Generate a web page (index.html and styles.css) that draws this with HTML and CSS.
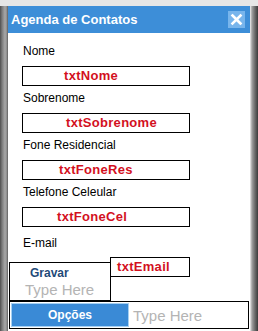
FILE: index.html
```html
<!DOCTYPE html>
<html lang="pt">
<head>
    <meta charset="UTF-8">
    <title>Agenda de Contatos</title>
    <link rel="stylesheet" href="styles.css">
</head>
<body>
    <div class="device">
        <div class="window">
            <div class="titlebar">
                <span class="title">Agenda de Contatos</span>
                <span class="close">
                    <svg width="17" height="17" viewBox="0 0 17 17">
                        <path d="M4.5 4.5 L12.5 12.5 M12.5 4.5 L4.5 12.5" stroke="#fff" stroke-width="2.6" stroke-linecap="square"/>
                    </svg>
                </span>
            </div>

            <div class="content">
                <div class="field">
                    <div class="label">Nome</div>
                    <div class="box"><span class="ctl ctl-nome">txtNome</span></div>
                </div>
                <div class="field">
                    <div class="label">Sobrenome</div>
                    <div class="box"><span class="ctl ctl-sobrenome">txtSobrenome</span></div>
                </div>
                <div class="field">
                    <div class="label">Fone Residencial</div>
                    <div class="box"><span class="ctl ctl-fone">txtFoneRes</span></div>
                </div>
                <div class="field">
                    <div class="label">Telefone Celeular</div>
                    <div class="box"><span class="ctl ctl-cel">txtFoneCel</span></div>
                </div>
                <div class="field field-email">
                    <div class="label">E-mail</div>
                    <div class="box box-email"><span class="ctl ctl-email">txtEmail</span></div>
                </div>
            </div>

            <div class="menubar">
                <div class="menu-btn">Opções</div>
                <div class="type-here">Type Here</div>
            </div>
        </div>

        <!-- popup menu over the form -->
        <div class="popup">
            <div class="popup-item">Gravar</div>
            <div class="popup-type">Type Here</div>
        </div>
    </div>
</body>
</html>
```

FILE: styles.css
```css
body {
    margin: 0;
    font-family: "Liberation Sans", Arial, sans-serif;
}
.device {
    position: relative;
    width: 258px;
    height: 331px;
    box-sizing: border-box;
    padding: 6px 8px 2px 8px;
    background:
        linear-gradient(to bottom, #e6e6e6 0, #e6e6e6 6px, transparent 6px),
        linear-gradient(to right, #4e4e4e 0, #7a7a7a 2px, #a8a8a8 5px, #8a8a8a 7px, #555 8px,
                        #fff 8px, #fff 250px, #f0f0f0 250px, #a0a0a0 252px, #6a6a6a 255px, #3c3c3c 258px);
}
.window {
    height: 323px;
    background: white;
    display: flex;
    flex-direction: column;
}
.titlebar {
    height: 27px;
    background-color: #3d8ed8;
    display: flex;
    align-items: center;
    justify-content: space-between;
    padding: 0 5px 0 3px;
}
.title {
    color: white;
    font-weight: bold;
    font-size: 13px;
    line-height: 15px;
}
.close {
    width: 17px;
    height: 17px;
    background-color: #78b5ec;
    display: block;
}
.close svg {
    display: block;
}
.content {
    flex: 1;
    padding: 11px 0 0 14px;
}
.field {
    margin-bottom: 5px;
}
.label {
    font-size: 12px;
    line-height: 14px;
    color: #000;
    margin: 0 0 8px 1px;
}
.box {
    width: 168px;
    height: 20px;
    box-sizing: border-box;
    border: 1px solid #000;
    background: white;
}
.ctl {
    display: block;
    color: #d3101e;
    font-weight: bold;
    font-size: 13px;
    line-height: 18px;
    letter-spacing: 0.3px;
}
.ctl-nome { padding-left: 41px; }
.ctl-sobrenome { padding-left: 43px; }
.ctl-fone { padding-left: 36px; }
.ctl-cel { padding-left: 34px; }
.ctl-email { padding-left: 6px; }
.field-email {
    margin-top: 9px;
}
.field-email .label {
    margin-bottom: 7px;
}
.box-email {
    width: 80px;
    margin-left: 88px;
}
.menubar {
    height: 28px;
    margin: 0 1px 0 1px;
    box-sizing: border-box;
    border: 1px solid #000;
    display: flex;
    align-items: center;
    padding-left: 1px;
}
.menu-btn {
    width: 118px;
    height: 24px;
    box-sizing: border-box;
    background-color: #3a8ad6;
    border: 1px solid #a6d0f2;
    color: white;
    font-weight: bold;
    font-size: 12px;
    line-height: 22px;
    text-align: center;
}
.type-here {
    margin-left: 4px;
    color: #b4b4b4;
    font-size: 15px;
}
.popup {
    position: absolute;
    left: 9px;
    top: 262px;
    width: 102px;
    height: 39px;
    box-sizing: border-box;
    border: 1px solid #000;
    background: white;
}
.popup-item {
    color: #1f4a78;
    font-weight: bold;
    font-size: 12px;
    line-height: 14px;
    padding: 3px 0 0 20px;
}
.popup-type {
    color: #b4b4b4;
    font-size: 15px;
    line-height: 18px;
    padding: 1px 0 0 15px;
}
```
